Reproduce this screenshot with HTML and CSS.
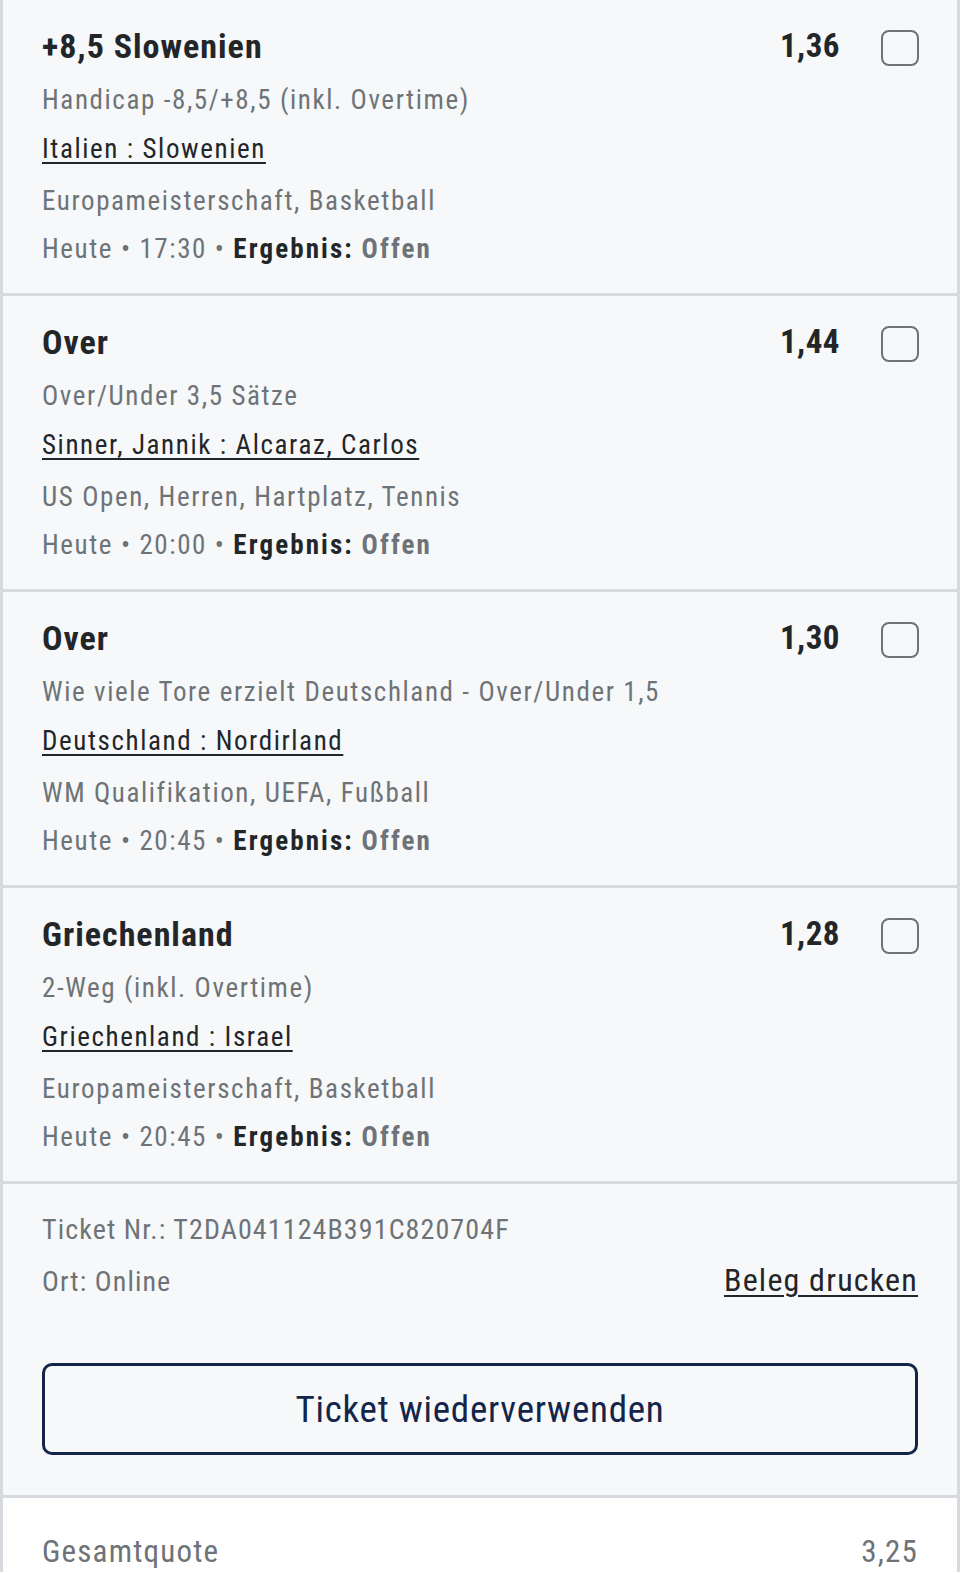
FILE: index.html
```html
<!DOCTYPE html>
<html lang="de">
<head>
<meta charset="utf-8">
<link rel="stylesheet" href="styles.css">
</head>
<body>
<div class="ticket">
  <div class="bet">
    <div class="bet-main">
      <div class="bet-title">+8,5 Slowenien</div>
      <div class="bet-market">Handicap -8,5/+8,5 (inkl. Overtime)</div>
      <div class="bet-teams"><a href="#">Italien : Slowenien</a></div>
      <div class="bet-league">Europameisterschaft, Basketball</div>
      <div class="bet-meta">Heute • 17:30 • <b class="res-label">Ergebnis:</b> <b class="res-value">Offen</b></div>
    </div>
    <div class="bet-odds">1,36</div>
    <span class="check"></span>
  </div>
  <div class="bet">
    <div class="bet-main">
      <div class="bet-title">Over</div>
      <div class="bet-market">Over/Under 3,5 Sätze</div>
      <div class="bet-teams"><a href="#">Sinner, Jannik : Alcaraz, Carlos</a></div>
      <div class="bet-league">US Open, Herren, Hartplatz, Tennis</div>
      <div class="bet-meta">Heute • 20:00 • <b class="res-label">Ergebnis:</b> <b class="res-value">Offen</b></div>
    </div>
    <div class="bet-odds">1,44</div>
    <span class="check"></span>
  </div>
  <div class="bet">
    <div class="bet-main">
      <div class="bet-title">Over</div>
      <div class="bet-market">Wie viele Tore erzielt Deutschland - Over/Under 1,5</div>
      <div class="bet-teams"><a href="#">Deutschland : Nordirland</a></div>
      <div class="bet-league">WM Qualifikation, UEFA, Fußball</div>
      <div class="bet-meta">Heute • 20:45 • <b class="res-label">Ergebnis:</b> <b class="res-value">Offen</b></div>
    </div>
    <div class="bet-odds">1,30</div>
    <span class="check"></span>
  </div>
  <div class="bet">
    <div class="bet-main">
      <div class="bet-title">Griechenland</div>
      <div class="bet-market">2-Weg (inkl. Overtime)</div>
      <div class="bet-teams"><a href="#">Griechenland : Israel</a></div>
      <div class="bet-league">Europameisterschaft, Basketball</div>
      <div class="bet-meta">Heute • 20:45 • <b class="res-label">Ergebnis:</b> <b class="res-value">Offen</b></div>
    </div>
    <div class="bet-odds">1,28</div>
    <span class="check"></span>
  </div>
  <div class="info">
    <div class="info-id">Ticket Nr.: T2DA041124B391C820704F</div>
    <div class="info-row">
      <span class="info-place">Ort: Online</span>
      <a href="#" class="print">Beleg drucken</a>
    </div>
    <button class="reuse">Ticket wiederverwenden</button>
  </div>
  <div class="total">
    <span>Gesamtquote</span>
    <span>3,25</span>
  </div>
</div>
</body>
</html>
```
FILE: styles.css
```css
html, body {
  margin: 0;
  padding: 0;
  background: #ffffff;
}
body {
  font-family: "Roboto Condensed", Roboto, "Liberation Sans", sans-serif;
  font-stretch: condensed;
  color: #232629;
}
.ticket {
  border-left: 3px solid #d6d9dd;
  border-right: 3px solid #d6d9dd;
  background: #f6f8f9;
}
.bet {
  display: flex;
  align-items: flex-start;
  padding: 26px 38px 26px 39px;
  border-bottom: 3px solid #d6d9dd;
}
.bet-main {
  flex: 1;
  min-width: 0;
}
.bet-title {
  font-size: 34px;
  line-height: 40px;
  font-weight: 700;
  letter-spacing: 1px;
  color: #232629;
}
.bet-market,
.bet-teams,
.bet-league,
.bet-meta {
  font-size: 27px;
  line-height: 36px;
  letter-spacing: 1.6px;
  color: #6e7378;
}
.bet-market { margin-top: 16px; }
.bet-teams { margin-top: 13px; }
.bet-league { margin-top: 16px; }
.bet-meta { margin-top: 12px; }
.bet-teams a {
  color: #232629;
  text-decoration: underline;
  text-decoration-thickness: 2px;
  text-underline-offset: 4px;
}
.res-label {
  color: #232629;
  font-weight: 700;
  letter-spacing: 2.1px;
}
.res-value {
  color: #6e7378;
  font-weight: 700;
  letter-spacing: 2.1px;
}
.bet-odds {
  font-size: 33px;
  line-height: 40px;
  font-weight: 700;
  letter-spacing: 0.5px;
  color: #232629;
}
.check {
  width: 34px;
  height: 32px;
  margin-top: 4px;
  margin-left: 41px;
  border: 2.5px solid #6e7378;
  border-radius: 8px;
  flex: none;
}
.info {
  padding: 28px 39px 40px 39px;
  border-bottom: 3px solid #d6d9dd;
}
.info-id {
  font-size: 28px;
  line-height: 36px;
  letter-spacing: 1.1px;
  color: #6e7378;
}
.info-row {
  display: flex;
  justify-content: space-between;
  align-items: baseline;
  margin-top: 14px;
}
.info-place {
  font-size: 28px;
  line-height: 36px;
  letter-spacing: 1.1px;
  color: #6e7378;
}
.print {
  font-size: 32px;
  line-height: 36px;
  letter-spacing: 1.2px;
  color: #232629;
  text-decoration: underline;
  text-decoration-thickness: 2px;
  text-underline-offset: 4px;
}
.reuse {
  display: block;
  width: 100%;
  height: 92px;
  margin-top: 63px;
  background: transparent;
  border: 3px solid #14254a;
  border-radius: 10px;
  font-family: inherit;
  font-stretch: condensed;
  font-size: 37px;
  letter-spacing: 0.75px;
  color: #14254a;
  cursor: pointer;
}
.total {
  display: flex;
  justify-content: space-between;
  background: #ffffff;
  padding: 34px 39px 0 39px;
  font-size: 31px;
  line-height: 40px;
  letter-spacing: 1.2px;
  color: #6e7378;
}
```
